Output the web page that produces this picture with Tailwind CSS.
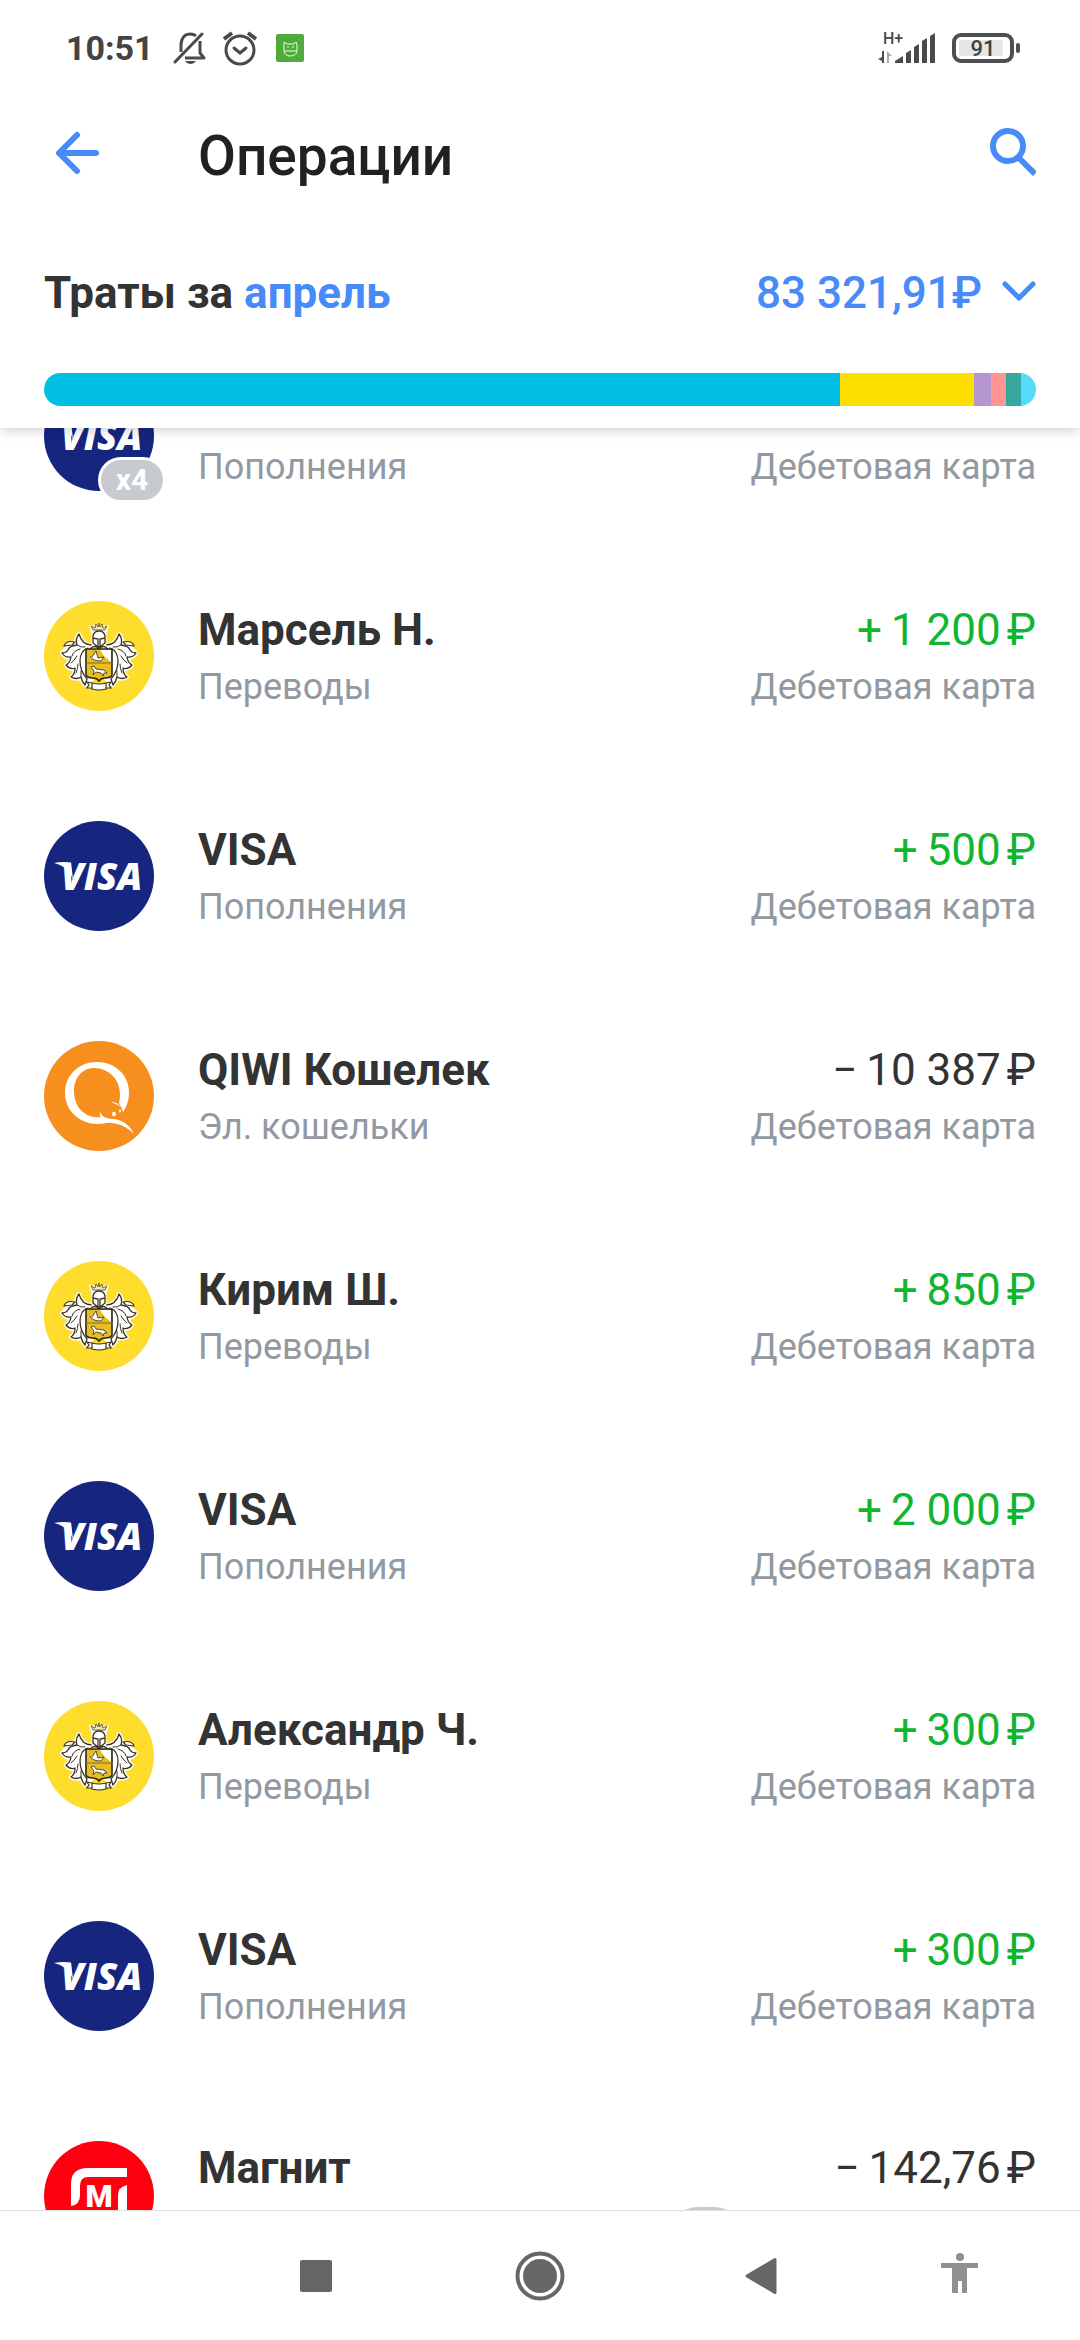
<!DOCTYPE html>
<html lang="ru">
<head>
  <meta charset="UTF-8" />
  <meta name="viewport" content="width=device-width, initial-scale=1.0"/>
  <title>Операции</title>
  <script src="https://cdn.jsdelivr.net/npm/@tailwindcss/browser@4"></script>
  <style>
    body {
      font-family: Roboto, 'Liberation Sans', sans-serif;
    }
  </style>
</head>
<body class="bg-white text-[#333333]">
  <!-- Логотипы -->
  <svg class="hidden" aria-hidden="true">
    <symbol id="logo-visa" viewBox="0 0 110 110">
      <circle cx="55" cy="55" r="55" fill="#16267f"/>
      <path d="M10 42 Q18 40.500 27 41.500 L29 58 Q24 45 10 42Z" fill="#fff"/>
      <text x="17" y="69" font-family="Open Sans" font-weight="800" font-style="italic" font-size="37" fill="#fff">VISA</text>
    </symbol>
    <symbol id="logo-tinkoff" viewBox="0 0 110 110">
      <circle cx="55" cy="55" r="55" fill="#ffdd2d"/>
      <g id="crest-wing" stroke-linejoin="round" stroke-linecap="round">
        <path d="M48 44 Q38 44 35 33 Q31 38 32 43 Q24 45 18 52 Q21 57 26 57 Q26 62 22 64 Q25 69 31 68 Q31 73 27 76 Q32 79 37 77 Q38 81 41 84 L48 78 V48Z" fill="#fff" stroke="#fff" stroke-width="4"/>
        <path d="M48 44 Q38 44 35 33 Q31 38 33 44 Q25 45 24 49 Q22 52 18 52 Q21 57 27 56 Q26 62 22 64 Q26 69 31 67 Q31 73 27 76 Q32 79 37 76 Q38 81 41 84 L43 78 Q36 70 36 60 Q36 50 44 47" fill="#fff" stroke="#3a3420" stroke-width="1.300"/>
        <path d="M20 45 Q22 39 31 41 L28 44Z" fill="#fff" stroke="#3a3420" stroke-width="1.200"/>
        <path d="M33 44 Q37 47 41 46 M36 48 Q29 50 28 55 M33 55 Q30 60 27 62 M34 63 Q34 68 32 72 M37 70 V76" fill="none" stroke="#3a3420" stroke-width="1"/>
      </g>
      <use href="#crest-wing" transform="matrix(-1 0 0 1 110 0)"/>
      <path d="M46 49 Q50 46 49 41 L49 32 L47 26 L63 26 L61 32 L61 41 Q60 46 64 49Z" fill="#fff" stroke="#fff" stroke-width="3"/>
      <path d="M49 29 L47 25 L51 27 L52 23 L54 26 L55 22 L56 26 L58 23 L59 27 L63 25 L61 29Z" fill="#f5e9a8" stroke="#6b6240" stroke-width="1"/>
      <path d="M49 42 V35 Q50 30 55 30 Q60 30 61 35 V42 L56 46 H54Z M49 37 L54 38 V46 M61 37 L56 38 V46 M46 48 Q51 43 55 48 Q59 43 64 48" fill="none" stroke="#3a3420" stroke-width="1.300"/>
      <path d="M42 48 H68 V74 Q67 77 61 77 Q57 77 55 80 Q53 77 49 77 Q43 77 42 74Z" fill="#e8bd20" stroke="#2b2718" stroke-width="1.600"/>
      <path d="M56 49 H67 V61 L60 55Z" fill="#fff"/>
      <path d="M42 62 H68" stroke="#7d6a1c" stroke-width="1"/>
      <path d="M46 55 Q48 60 57 60 L60 56 L54 57 L52 50 L48 56" fill="#fff" stroke="#2b2718" stroke-width="0.800"/>
      <path d="M47 66 L50 65 L52 68 L60 69 L63 72 L60 72 L59 75 L57 72 L52 71 L49 74 L50 70Z" fill="#fff" stroke="#2b2718" stroke-width="0.800"/>
      <path d="M43 81 L48 82 Q55 84 62 82 L67 81 L65 84 L67 87 L62 87 V88 Q55 90 48 88 V87 L43 87 L45 84Z M48 82 V87 M62 82 V87" fill="#fff" stroke="#3a3420" stroke-width="1.200"/>
    </symbol>
    <symbol id="logo-qiwi" viewBox="0 0 110 110">
      <circle cx="55" cy="55" r="55" fill="#f78f1e"/>
      <path d="M79 71 C83 65 85 59 85 51 C85 34 71 21 53 21 C35 21 21 34 21 52 C21 70 36 83 54 83 C60 83 62 81 68 82 C76 83 83 86 90 93 C86 84 78 79 70 78 C63 78 58 76 56 71 Q55 75 57 76 C41 78 30 66 30 50 C30 37 38 27 50 27 C65 27 76 39 76 53 Q76 58 75 62 Q78 66 79 71Z" fill="#fff"/>
      <path d="M67 61 Q73 60 78 67 Q73 63 67 61Z" fill="#fff"/>
      <ellipse cx="70" cy="73" rx="2" ry="2.200" fill="#fff"/>
      <ellipse cx="76" cy="70" rx="0.900" ry="1.800" fill="#fff"/>
    </symbol>
    <symbol id="logo-magnit" viewBox="0 0 110 110">
      <circle cx="55" cy="55" r="55" fill="#ff0010"/>
      <path d="M83 27 H42 Q27 28 27 43 V65 Q36 64 36 54 V45 Q36 36 44 36 H83Z" fill="#fff"/>
      <path d="M83 44 Q74 46 74 54 V74 H27 V83 H68 Q83 82 83 67Z" fill="#fff"/>
      <text x="55" y="66" text-anchor="middle" font-family="Roboto" font-weight="900" font-size="31" fill="#fff">M</text>
    </symbol>
  </svg>

  <div class="h-screen flex flex-col overflow-hidden">
    <!-- Шапка -->
    <header class="relative z-10 bg-white shadow-[0_2px_12px_rgba(0,0,0,0.2)] pb-[22px]">
      <div class="h-24 pl-[66px] pr-[60px] flex items-center justify-between text-[#444444]">
        <div class="flex items-center">
          <span class="w-[106px] text-[34px] leading-10 font-bold">10:51</span>
          <svg class="w-9 h-9" viewBox="0 0 36 36" fill="none" stroke="#4a4a4a" stroke-width="3" aria-label="Без звука">
            <path d="M9 22 V14 Q10 4 18 4 Q22 4 24 6"/>
            <path d="M28 11 V23 L32 28 H13" stroke-linejoin="round"/>
            <path d="M3 32 L30 4" stroke-linecap="round"/>
            <path d="M13 31 H24 Q22 34 18 34 Q15 34 13 31Z" fill="#4a4a4a" stroke="none"/>
          </svg>
          <svg class="w-9 h-9 ml-[14px]" viewBox="0 0 36 36" fill="none" stroke="#4a4a4a" stroke-width="3" aria-label="Будильник">
            <circle cx="18" cy="20" r="14"/>
            <path d="M12 18 L18 23 L24 18" stroke-linecap="round"/>
            <path d="M2 9 L10 3 M26 3 L34 9" stroke-width="4"/>
          </svg>
          <svg class="w-7 h-7 ml-[18px]" viewBox="0 0 28 28" fill="none" aria-label="Приложение">
            <rect width="28" height="28" rx="2" fill="#4fab3c"/>
            <path d="M8 17 Q9 22 14 22 Q20 22 21 17 H8 V11 L8 8 L11 10 H18 L20 8 L21 11 V17 M11 13 H13 M16 13 H18" stroke="#e9ffe0" stroke-width="1"/>
          </svg>
        </div>
        <div class="flex items-center gap-4">
          <svg class="w-[58px] h-10" viewBox="0 -4 58 40" fill="#4a4a4a" aria-label="H+">
            <text x="5" y="12" font-size="16" font-weight="500">H+</text>
            <path d="M4 19 H6 V31 H4 V29 L0 27 L4 25Z"/>
            <path d="M9 31 V19 L14 24 H11 V31Z" fill="#aaaaaa"/>
            <path d="M17 31 V29 L25 24 V31Z M28 31 V21 L33 18 V31Z M36 31 V15 L41 12 V31Z M44 31 V9 L49 6 V31Z M52 31 V4 L57 1 V31Z"/>
          </svg>
          <svg class="w-[68px] h-8" viewBox="0 0 68 32" aria-label="Батарея 91%">
            <rect x="2" y="3" width="58" height="26" rx="7" fill="none" stroke="#4f4f4f" stroke-width="4"/>
            <rect x="7" y="8" width="44" height="16" rx="2" fill="#e6e6e6"/>
            <rect x="64" y="11" width="4" height="10" rx="2" fill="#4f4f4f"/>
            <text x="31" y="24" text-anchor="middle" font-size="22" font-weight="500" fill="#3f3f3f">91</text>
          </svg>
        </div>
      </div>

      <div class="h-[120px] px-11 flex items-center">
        <button class="w-[154px]" aria-label="Назад">
          <svg class="w-14 h-14 ml-2" viewBox="0 0 56 56" fill="none" stroke="#468bf7" stroke-width="6" stroke-linecap="round" stroke-linejoin="round">
            <path d="M44 25 H8 M25 7 L7 25 L25 43"/>
          </svg>
        </button>
        <h1 class="flex-1 text-[55px] leading-[66px] font-medium text-[#212121]">Операции</h1>
        <button aria-label="Поиск">
          <svg class="w-14 h-14" viewBox="0 0 56 56" fill="none" stroke="#468bf7">
            <circle cx="28" cy="18" r="15" stroke-width="6"/>
            <path d="M39 30 L55 46" stroke-width="6"/>
          </svg>
        </button>
      </div>

      <div class="mt-[49px] px-11 flex items-center justify-between text-[44px] leading-[56px]">
        <h2 class="font-bold">Траты за <a href="#" class="text-[#468bf7]">апрель</a></h2>
        <button class="flex items-center gap-[18px] font-medium text-[#468bf7]">
          83 321,91₽
          <svg class="w-9 h-9" viewBox="0 0 36 36" fill="none" stroke="#468bf7" stroke-width="5" stroke-linecap="round" stroke-linejoin="round">
            <path d="M5 9 L19 23 L33 9"/>
          </svg>
        </button>
      </div>

      <!-- Доли категорий -->
      <div id="shares" class="mt-[52px] mx-11 h-[33px] flex rounded-full overflow-hidden"></div>
    </header>

    <!-- Список операций -->
    <main class="flex-1 min-h-0 overflow-hidden">
      <ul id="operations" class="-mt-[47px] px-11"></ul>
    </main>

    <!-- Навигация -->
    <nav class="h-[130px] shrink-0 border-t border-[#e0e0e0] bg-white grid grid-cols-[204fr_224fr_224fr_218fr_180fr_30fr] items-center justify-items-center">
      <span></span>
      <button aria-label="Недавние">
        <svg class="w-[50px] h-[50px]" viewBox="0 0 50 50" fill="#666666"><rect x="9" y="9" width="32" height="32" rx="2"/></svg>
      </button>
      <button aria-label="Домой">
        <svg class="w-[50px] h-[50px]" viewBox="0 0 50 50" fill="#666666">
          <circle cx="25" cy="25" r="22.500" fill="none" stroke="#666666" stroke-width="4"/>
          <circle cx="25" cy="25" r="17"/>
        </svg>
      </button>
      <button aria-label="Назад">
        <svg class="w-[50px] h-[50px]" viewBox="0 0 50 50" fill="#666666" stroke="#666666" stroke-width="3" stroke-linejoin="round"><path d="M11 25 L39 8.500 V41.500Z"/></svg>
      </button>
      <button aria-label="Специальные возможности">
        <svg class="w-[50px] h-[50px]" viewBox="0 0 50 50" fill="#909090">
          <circle cx="25" cy="6" r="4"/>
          <path d="M6 12 H43 V17 H32 V42 H27 V30 H23 V42 H17 V17 H6Z"/>
        </svg>
      </button>
      <span></span>
    </nav>
  </div>

  <script>
    const shares = [
      ['#00bee3', 796], ['#fde000', 134], ['#b597d0', 17],
      ['#ff9595', 15], ['#35a79c', 15], ['#55dafa', 15],
    ];

    document.getElementById('shares').innerHTML = shares
      .map(([color, value]) => `<div style="background:${color};flex:${value} 1 0"></div>`)
      .join('');

    const operations = [
      { logo: 'visa', name: 'VISA', category: 'Пополнения', amount: '+&thinsp;2 000', income: true, count: 'x4' },
      { logo: 'tinkoff', name: 'Марсель Н.', category: 'Переводы', amount: '+&thinsp;1 200', income: true },
      { logo: 'visa', name: 'VISA', category: 'Пополнения', amount: '+&thinsp;500', income: true },
      { logo: 'qiwi', name: 'QIWI Кошелек', category: 'Эл. кошельки', amount: '−&thinsp;10 387' },
      { logo: 'tinkoff', name: 'Кирим Ш.', category: 'Переводы', amount: '+&thinsp;850', income: true },
      { logo: 'visa', name: 'VISA', category: 'Пополнения', amount: '+&thinsp;2 000', income: true },
      { logo: 'tinkoff', name: 'Александр Ч.', category: 'Переводы', amount: '+&thinsp;300', income: true },
      { logo: 'visa', name: 'VISA', category: 'Пополнения', amount: '+&thinsp;300', income: true },
      { logo: 'magnit', name: 'Магнит', category: 'Супермаркеты', amount: '−&thinsp;142,76', bonus: true },
    ];

    document.getElementById('operations').innerHTML = operations.map(op => `
      <li class="h-[220px] flex items-start">
        <div class="relative w-[110px] h-[110px] mr-11 shrink-0">
          <svg class="w-full h-full"><use href="#logo-${op.logo}"/></svg>
          ${op.count ? `<span class="absolute left-[54px] top-[76px] w-[68px] h-[46px] rounded-full border-3 border-white bg-[#c7cacf] text-white text-[30px] leading-10 font-bold text-center">${op.count}</span>` : ''}
        </div>
        <div class="flex-1 min-w-0 ${op.bonus ? 'space-y-3' : ''}">
          <div class="text-[44px] ${op.bonus ? 'leading-[54px]' : 'leading-[58px]'} font-bold truncate">${op.name}</div>
          <div class="text-[36px] leading-[56px] text-[#9299a2]">${op.category}</div>
        </div>
        <div class="text-right ${op.bonus ? 'space-y-3' : ''}">
          <div class="text-[44px] ${op.bonus ? 'leading-[54px]' : 'leading-[58px]'} ${op.income ? 'text-[#10b531]' : 'text-[#333333]'}">${op.amount}<span class="ml-[6px]">₽</span></div>
          <div class="text-[36px] leading-[56px] text-[#9299a2] flex items-center justify-end">
            ${op.bonus ? '<span class="mr-[7px] w-[76px] h-[60px] rounded-full bg-[#c7cacf]"></span>' : ''}Дебетовая карта
          </div>
        </div>
      </li>`).join('');
  </script>
</body>
</html>
